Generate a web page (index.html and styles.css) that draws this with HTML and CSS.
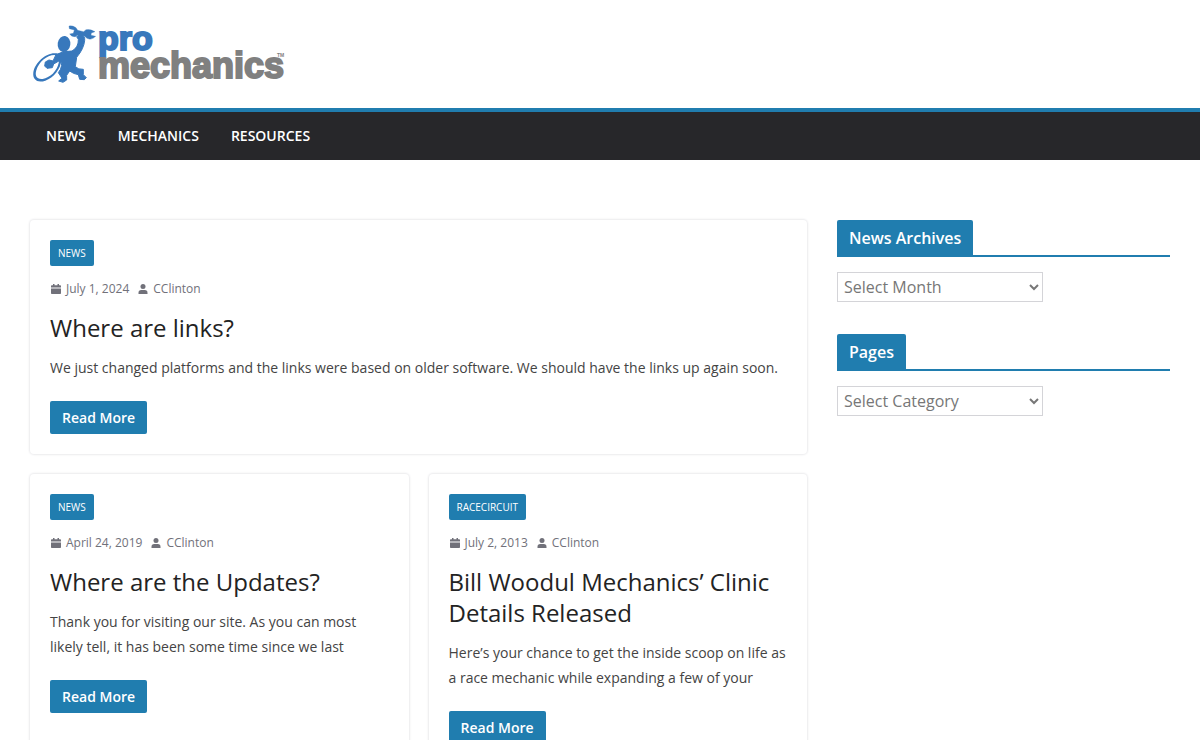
FILE: index.html
```html
<!DOCTYPE html>
<html lang="en">
<head>
<meta charset="utf-8">
<meta name="viewport" content="width=device-width, initial-scale=1">
<title>Pro Mechanics</title>
<link rel="stylesheet" href="styles.css">
</head>
<body>
<svg class="sprite" aria-hidden="true">
  <symbol id="calendar" viewBox="0 0 12 12">
    <path d="M3 1h1.500v1.200h3V1H9v1.200h1.200q.8 0 .8.800v1.400H1V3q0-.8.800-.8H3zM1 5.400h10v4.800q0 .8-.8.800H1.800q-.8 0-.8-.8z"/>
  </symbol>
  <symbol id="person" viewBox="0 0 12 12">
    <circle cx="6" cy="3.500" r="2.500"/>
    <path d="M1.500 11V9.800q0-2.800 2.800-2.800h3.400q2.800 0 2.800 2.800V11z"/>
  </symbol>
</svg>
<header class="site-header">
  <div class="container brand">
    <a class="logo" href="#" aria-label="Pro Mechanics">
      <svg width="260" height="64" viewBox="0 0 260 64">
        <g transform="translate(-2 0) scale(.3333)" fill="#3878bc">
          <path fill-rule="evenodd" d="M86 94C57 89 21 120 16 151C13 174 29 184 52 176C77 167 99 140 100 113Q98 99 86 94ZM79 99C91 102 95 110 92 123C87 148 66 167 44 171C26 173 20 162 25 145C32 120 57 99 79 99Z"/>
          <ellipse cx="108" cy="66" rx="19" ry="24" transform="rotate(8 108 66)"/>
          <path d="M84 98Q106 86 132 87Q152 76 151 52L146 44L158 36Q172 42 170 55Q168 80 146 106L142 134Q151 143 166 142L166 158L175 167L169 173L155 172L151 158Q136 156 125 147L116 160L116 174L105 181L92 177L102 169L91 152Q99 143 101 130L98 114L77 126L73 137L57 139L50 132L52 120L63 114L75 117Z" stroke="#3878bc" stroke-width="3" stroke-linejoin="round"/>
          <path d="M123 12Q135 10 144 17L149 25L167 29L174 23Q187 20 201 29L190 33L189 40L203 43Q190 56 177 49L169 42L148 40L142 44Q131 46 125 36L136 34L139 24L124 20Z" stroke="#3878bc" stroke-width="1"/>
        </g>
        <text class="logo-text logo-pro" x="68" y="28">pro</text>
        <text class="logo-text logo-mechanics" x="68" y="56">mechanics</text>
        <text class="logo-mark" x="247" y="35">TM</text>
      </svg>
    </a>
  </div>
  <nav class="site-nav" aria-label="Primary">
    <div class="container nav-links">
      <a href="#">News</a>
      <a href="#">Mechanics</a>
      <a href="#">Resources</a>
    </div>
  </nav>
</header>
<div class="container page">
  <main class="posts">
    <article class="card featured">
      <a class="badge" href="#">News</a>
      <div class="meta">
        <a href="#"><svg class="icon"><use href="#calendar"/></svg>July 1, 2024</a>
        <a href="#"><svg class="icon"><use href="#person"/></svg>CClinton</a>
      </div>
      <h2><a href="#">Where are links?</a></h2>
      <p>We just changed platforms and the links were based on older software. We should have the links up again soon.</p>
      <a class="more" href="#">Read More</a>
    </article>
    <article class="card">
      <a class="badge" href="#">News</a>
      <div class="meta">
        <a href="#"><svg class="icon"><use href="#calendar"/></svg>April 24, 2019</a>
        <a href="#"><svg class="icon"><use href="#person"/></svg>CClinton</a>
      </div>
      <h2><a href="#">Where are the Updates?</a></h2>
      <p>Thank you for visiting our site. As you can most likely tell, it has been some time since we last</p>
      <a class="more" href="#">Read More</a>
    </article>
    <article class="card">
      <a class="badge" href="#">Racecircuit</a>
      <div class="meta">
        <a href="#"><svg class="icon"><use href="#calendar"/></svg>July 2, 2013</a>
        <a href="#"><svg class="icon"><use href="#person"/></svg>CClinton</a>
      </div>
      <h2><a href="#">Bill Woodul Mechanics’ Clinic Details Released</a></h2>
      <p>Here’s your chance to get the inside scoop on life as a race mechanic while expanding a few of your</p>
      <a class="more" href="#">Read More</a>
    </article>
  </main>
  <aside class="sidebar">
    <section>
      <h3 class="widget-title"><label for="month">News Archives</label></h3>
      <div class="picker">
        <select id="month"><option>Select Month</option></select>
      </div>
    </section>
    <section>
      <h3 class="widget-title"><label for="category">Pages</label></h3>
      <div class="picker">
        <select id="category"><option>Select Category</option></select>
      </div>
    </section>
  </aside>
</div>
</body>
</html>
```

FILE: styles.css
```css
* {
  box-sizing: border-box;
}

body {
  margin: 0;
  background: #fff;
  color: #444;
  font: 400 14px/25px "Open Sans", sans-serif;
}

a {
  color: inherit;
  text-decoration: none;
}

h2,
h3,
p {
  margin: 0;
}

.sprite {
  display: none;
}

.container {
  max-width: 1200px;
  margin: 0 auto;
  padding: 0 30px;
}

.brand {
  padding-top: 22px;
  padding-bottom: 22px;
}

.logo {
  display: flex;
}

.logo svg {
  overflow: visible;
}

.logo-text {
  font-family: "Liberation Sans", Arial, sans-serif;
  font-weight: 700;
  stroke-width: 2px;
}

.logo-pro {
  font-size: 34px;
  fill: #3878bc;
  stroke: #3878bc;
}

.logo-mechanics {
  font-size: 36px;
  fill: #808080;
  stroke: #808080;
}

.logo-mark {
  font: 700 5px "Liberation Sans", Arial, sans-serif;
  fill: #808080;
}

.site-nav {
  background: #27272a;
  border-top: 4px solid #207daf;
}

.nav-links {
  display: flex;
  flex-wrap: wrap;
}

.nav-links a {
  padding: 0 16px;
  color: #fff;
  font-weight: 600;
  line-height: 48px;
  text-transform: uppercase;
}

.page {
  display: grid;
  grid-template-columns: 7fr 3fr;
  gap: 30px;
  padding-top: 60px;
  padding-bottom: 60px;
}

.posts {
  display: grid;
  grid-template-columns: 1fr 1fr;
  gap: 20px;
}

.card {
  display: flex;
  flex-direction: column;
  align-items: flex-start;
  padding: 20px;
  border-radius: 4px;
  box-shadow: 0 0 2px 1px #ebebed;
}

.featured {
  grid-column: 1 / -1;
}

.badge {
  padding: 0 8px;
  border-radius: 2px;
  background: #207daf;
  color: #fff;
  font-size: 10px;
  line-height: 26px;
  text-transform: uppercase;
}

.meta {
  display: flex;
  gap: 8px;
  margin: 12px 0 13px;
  color: #71717a;
  font-size: 12px;
  line-height: 21px;
}

.meta a {
  display: flex;
  align-items: center;
  gap: 4px;
}

.icon {
  width: 12px;
  height: 12px;
  fill: #71717a;
}

.card h2 {
  margin-bottom: 12px;
  color: #232323;
  font-size: 24px;
  font-weight: 400;
  line-height: 31px;
}

.more {
  margin-top: 21px;
  padding: 0 12px;
  border-radius: 2px;
  background: #207daf;
  color: #fff;
  font-weight: 600;
  line-height: 33px;
}

.sidebar {
  display: flex;
  flex-direction: column;
  gap: 32px;
}

.widget-title {
  display: flex;
  margin-bottom: 15px;
  border-bottom: 2px solid #207daf;
  color: #fff;
  font-size: 16px;
  font-weight: 600;
  line-height: 33px;
}

.widget-title label {
  padding: 2px 12px 0;
  border-radius: 2px 2px 0 0;
  background: #207daf;
}

.picker {
  display: flex;
}

select {
  width: 206px;
  height: 30px;
  padding: 0 2px;
  border: 1px solid #d4d4d8;
  border-radius: 0;
  background: #fff;
  color: #777;
  font: 400 16px "Open Sans", sans-serif;
}
```
